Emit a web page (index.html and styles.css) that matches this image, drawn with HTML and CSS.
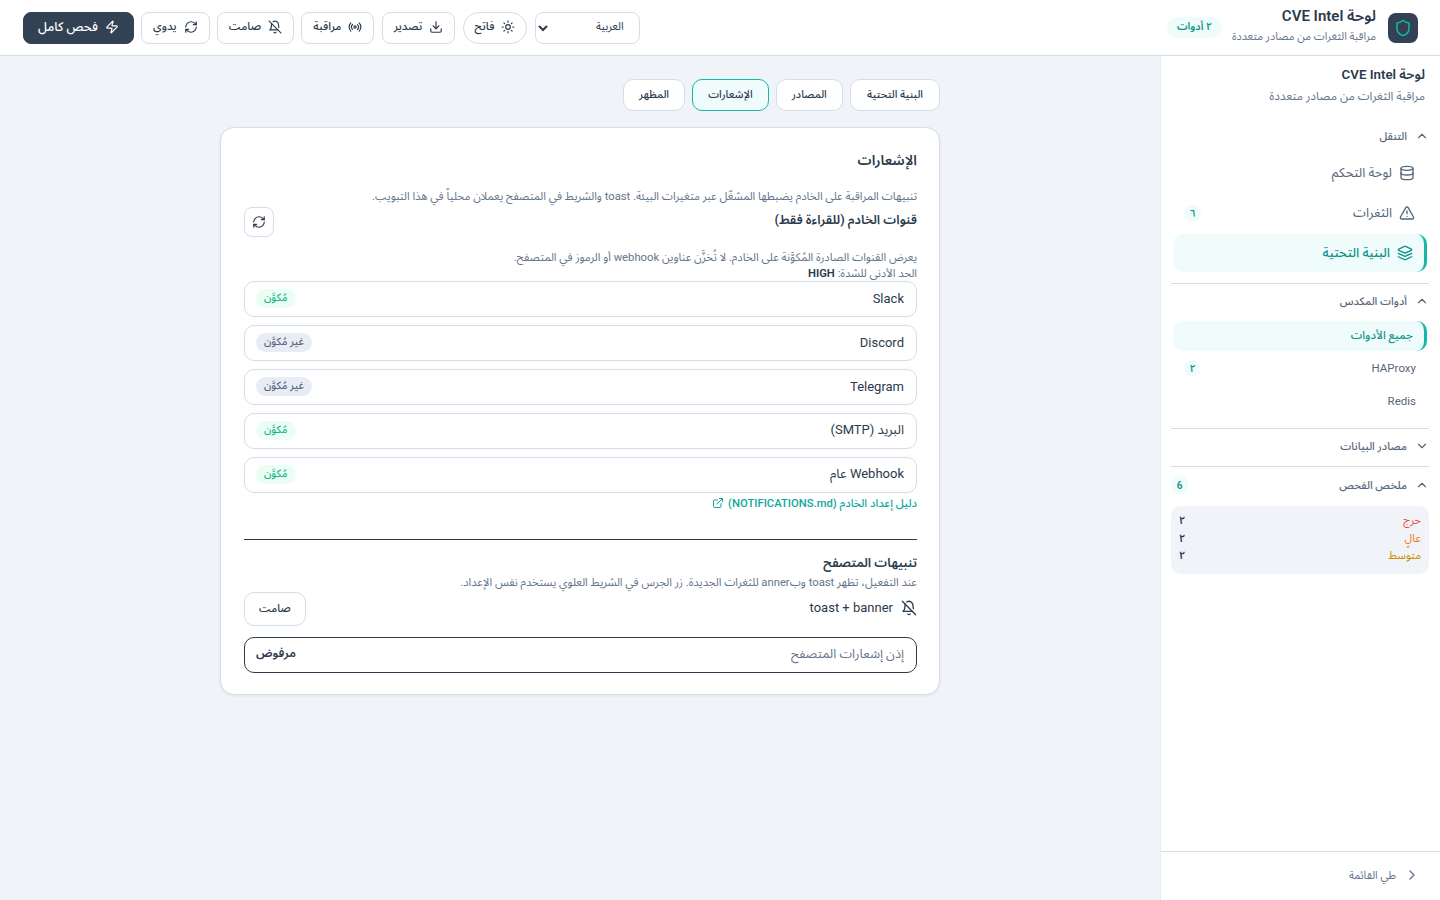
FILE: index.html
```html
<!DOCTYPE html>
<html lang="ar" dir="rtl">

<head>
    <meta charset="UTF-8">
    <meta name="viewport" content="width=device-width, initial-scale=1.0">
    <title>لوحة CVE Intel</title>
    <link rel="stylesheet" href="styles.css">
</head>

<body>
    <svg class="sprite" xmlns="http://www.w3.org/2000/svg">
        <symbol id="i-shield" viewBox="0 0 24 24"><path d="M20 13c0 5-3.5 7.5-7.66 8.95a1 1 0 0 1-.67-.01C7.5 20.5 4 18 4 13V6a1 1 0 0 1 1-1c2 0 4.5-1.2 6.24-2.72a1.17 1.17 0 0 1 1.52 0C14.51 3.81 17 5 19 5a1 1 0 0 1 1 1z"/></symbol>
        <symbol id="i-database" viewBox="0 0 24 24"><ellipse cx="12" cy="5" rx="9" ry="3"/><path d="M3 5V19A9 3 0 0 0 21 19V5"/><path d="M3 12A9 3 0 0 0 21 12"/></symbol>
        <symbol id="i-alert" viewBox="0 0 24 24"><path d="m21.73 18-8-14a2 2 0 0 0-3.48 0l-8 14A2 2 0 0 0 4 21h16a2 2 0 0 0 1.73-3"/><path d="M12 9v4"/><path d="M12 17h.01"/></symbol>
        <symbol id="i-layers" viewBox="0 0 24 24"><path d="m12.83 2.18a2 2 0 0 0-1.66 0L2.6 6.08a1 1 0 0 0 0 1.83l8.58 3.91a2 2 0 0 0 1.66 0l8.58-3.9a1 1 0 0 0 0-1.83Z"/><path d="m22 17.65-9.17 4.16a2 2 0 0 1-1.66 0L2 17.65"/><path d="m22 12.65-9.17 4.16a2 2 0 0 1-1.66 0L2 12.65"/></symbol>
        <symbol id="i-up" viewBox="0 0 24 24"><path d="m18 15-6-6-6 6"/></symbol>
        <symbol id="i-down" viewBox="0 0 24 24"><path d="m6 9 6 6 6-6"/></symbol>
        <symbol id="i-right" viewBox="0 0 24 24"><path d="m9 18 6-6-6-6"/></symbol>
        <symbol id="i-bell-off" viewBox="0 0 24 24"><path d="M8.7 3A6 6 0 0 1 18 8a21.3 21.3 0 0 0 .6 5"/><path d="M17 17H3s3-2 3-9a4.67 4.67 0 0 1 .3-1.7"/><path d="M10.3 21a1.94 1.94 0 0 0 3.4 0"/><path d="m2 2 20 20"/></symbol>
        <symbol id="i-radio" viewBox="0 0 24 24"><path d="M4.9 19.1C1 15.2 1 8.8 4.9 4.9"/><path d="M7.8 16.2c-2.3-2.3-2.3-6.1 0-8.5"/><circle cx="12" cy="12" r="2"/><path d="M16.2 7.8c2.3 2.3 2.3 6.1 0 8.5"/><path d="M19.1 4.9C23 8.8 23 15.1 19.1 19"/></symbol>
        <symbol id="i-download" viewBox="0 0 24 24"><path d="M21 15v4a2 2 0 0 1-2 2H5a2 2 0 0 1-2-2v-4"/><polyline points="7 10 12 15 17 10"/><line x1="12" y1="15" x2="12" y2="3"/></symbol>
        <symbol id="i-sun" viewBox="0 0 24 24"><circle cx="12" cy="12" r="4"/><path d="M12 2v2"/><path d="M12 20v2"/><path d="m4.93 4.93 1.41 1.41"/><path d="m17.66 17.66 1.41 1.41"/><path d="M2 12h2"/><path d="M20 12h2"/><path d="m6.34 17.66-1.41 1.41"/><path d="m19.07 4.93-1.41 1.41"/></symbol>
        <symbol id="i-refresh" viewBox="0 0 24 24"><path d="M3 12a9 9 0 0 1 9-9 9.75 9.75 0 0 1 6.74 2.74L21 8"/><path d="M21 3v5h-5"/><path d="M21 12a9 9 0 0 1-9 9 9.75 9.75 0 0 1-6.74-2.74L3 16"/><path d="M8 16H3v5"/></symbol>
        <symbol id="i-zap" viewBox="0 0 24 24"><path d="M4 14a1 1 0 0 1-.78-1.63l9.9-10.2a.5.5 0 0 1 .86.46l-1.92 6.02A1 1 0 0 0 13 10h7a1 1 0 0 1 .78 1.63l-9.9 10.2a.5.5 0 0 1-.86-.46l1.92-6.02A1 1 0 0 0 11 14z"/></symbol>
        <symbol id="i-external" viewBox="0 0 24 24"><path d="M15 3h6v6"/><path d="M10 14 21 3"/><path d="M18 13v6a2 2 0 0 1-2 2H5a2 2 0 0 1-2-2V8a2 2 0 0 1 2-2h6"/></symbol>
    </svg>

    <header class="topbar">
        <div class="brand">
            <div class="brand-logo"><svg class="icon icon-18"><use href="#i-shield"></use></svg></div>
            <div class="brand-text">
                <h1>لوحة CVE Intel</h1>
                <p>مراقبة الثغرات من مصادر متعددة</p>
            </div>
            <span class="tools-pill">٢ أدوات</span>
        </div>
        <div class="actions">
            <select class="lang-select">
                <option>العربية</option>
                <option>English</option>
            </select>
            <button class="btn btn-pill"><svg class="icon"><use href="#i-sun"></use></svg>فاتح</button>
            <button class="btn"><svg class="icon"><use href="#i-download"></use></svg>تصدير</button>
            <button class="btn"><svg class="icon"><use href="#i-radio"></use></svg>مراقبة</button>
            <button class="btn"><svg class="icon"><use href="#i-bell-off"></use></svg>صامت</button>
            <button class="btn"><svg class="icon"><use href="#i-refresh"></use></svg>يدوي</button>
            <button class="btn btn-dark"><svg class="icon"><use href="#i-zap"></use></svg>فحص كامل</button>
        </div>
    </header>

    <div class="layout">
        <aside class="sidebar">
            <div class="side-scroll">
                <div class="side-brand">
                    <h2>لوحة CVE Intel</h2>
                    <p>مراقبة الثغرات من مصادر متعددة</p>
                </div>

                <section class="side-section side-nav">
                    <div class="side-head"><svg class="icon icon-14"><use href="#i-up"></use></svg><span>التنقل</span></div>
                    <a class="nav-item"><svg class="icon"><use href="#i-database"></use></svg>لوحة التحكم</a>
                    <a class="nav-item"><svg class="icon"><use href="#i-alert"></use></svg>الثغرات<span class="count">٦</span></a>
                    <a class="nav-item active"><svg class="icon"><use href="#i-layers"></use></svg>البنية التحتية</a>
                </section>

                <section class="side-section side-tools">
                    <div class="side-head"><svg class="icon icon-14"><use href="#i-up"></use></svg><span>أدوات المكدس</span></div>
                    <a class="sub-item active">جميع الأدوات</a>
                    <a class="sub-item">HAProxy<span class="count">٢</span></a>
                    <a class="sub-item">Redis</a>
                </section>

                <section class="side-section side-sources">
                    <div class="side-head"><svg class="icon icon-14"><use href="#i-down"></use></svg><span>مصادر البيانات</span></div>
                </section>

                <section class="side-section side-summary">
                    <div class="side-head"><svg class="icon icon-14"><use href="#i-up"></use></svg><span>ملخص الفحص</span><span class="count count-lg">6</span></div>
                    <div class="summary-box">
                        <div class="summary-row"><span class="sev-critical">حرج</span><b>٢</b></div>
                        <div class="summary-row"><span class="sev-high">عالٍ</span><b>٢</b></div>
                        <div class="summary-row"><span class="sev-medium">متوسط</span><b>٢</b></div>
                    </div>
                </section>
            </div>
            <div class="side-foot"><svg class="icon"><use href="#i-right"></use></svg>طي القائمة</div>
        </aside>

        <main class="content">
            <div class="settings">
                <nav class="tabs">
                    <button class="tab">البنية التحتية</button>
                    <button class="tab">المصادر</button>
                    <button class="tab active">الإشعارات</button>
                    <button class="tab">المظهر</button>
                </nav>

                <div class="card">
                    <h2 class="card-title">الإشعارات</h2>
                    <p class="muted intro">تنبيهات المراقبة على الخادم يضبطها المشغّل عبر متغيرات البيئة. toast والشريط في المتصفح يعملان محلياً في هذا التبويب.</p>

                    <div class="channels-head">
                        <h3>قنوات الخادم (للقراءة فقط)</h3>
                        <button class="icon-btn"><svg class="icon"><use href="#i-refresh"></use></svg></button>
                    </div>
                    <p class="muted">يعرض القنوات الصادرة المُكوَّنة على الخادم. لا تُخزَّن عناوين webhook أو الرموز في المتصفح.</p>
                    <p class="muted severity">الحد الأدنى للشدة: <b>HIGH</b></p>

                    <div class="channels">
                        <div class="channel"><span>Slack</span><span class="badge on">مُكوَّن</span></div>
                        <div class="channel"><span>Discord</span><span class="badge off">غير مُكوَّن</span></div>
                        <div class="channel"><span>Telegram</span><span class="badge off">غير مُكوَّن</span></div>
                        <div class="channel"><span>البريد (SMTP)</span><span class="badge on">مُكوَّن</span></div>
                        <div class="channel"><span>Webhook عام</span><span class="badge on">مُكوَّن</span></div>
                    </div>
                    <a class="guide-link">دليل إعداد الخادم (NOTIFICATIONS.md)<svg class="icon icon-12"><use href="#i-external"></use></svg></a>

                    <hr class="divider">

                    <h3 class="browser-title">تنبيهات المتصفح</h3>
                    <p class="muted browser-desc">عند التفعيل، تظهر toast وبanner للثغرات الجديدة. زر الجرس في الشريط العلوي يستخدم نفس الإعداد.</p>
                    <div class="toast-row">
                        <div class="toast-label"><svg class="icon"><use href="#i-bell-off"></use></svg>toast + banner</div>
                        <button class="btn btn-tall">صامت</button>
                    </div>
                    <div class="channel permission"><span>إذن إشعارات المتصفح</span><b>مرفوض</b></div>
                </div>
            </div>
        </main>
    </div>
</body>

</html>
```

FILE: styles.css
```css
* {
    margin: 0;
    padding: 0;
    box-sizing: border-box;
}

body {
    height: 100vh;
    overflow: hidden;
    background-color: #f0f4f8;
    color: #2b3a4d;
    font-family: Roboto, "Noto Sans Arabic", "Noto Sans", sans-serif;
    font-size: 14px;
}

button,
select {
    font-family: inherit;
    color: inherit;
}

.sprite {
    display: none;
}

.icon {
    width: 16px;
    height: 16px;
    flex-shrink: 0;
    fill: none;
    stroke: currentColor;
    stroke-width: 2;
    stroke-linecap: round;
    stroke-linejoin: round;
}

.icon-18 {
    width: 18px;
    height: 18px;
}

.icon-14 {
    width: 14px;
    height: 14px;
}

.icon-12 {
    width: 12px;
    height: 12px;
}

/* top bar */
.topbar {
    height: 56px;
    padding: 0 22px 0 23px;
    display: flex;
    justify-content: space-between;
    align-items: center;
    background-color: #fff;
    border-bottom: 1px solid #d5dee8;
}

.brand {
    display: flex;
    align-items: center;
}

.brand-logo {
    width: 30px;
    height: 30px;
    margin-left: 12px;
    display: flex;
    align-items: center;
    justify-content: center;
    border-radius: 8px;
    background-color: #334155;
    color: #14b8a6;
}

.brand-text {
    padding-bottom: 3px;
}

.brand-text h1 {
    font-size: 15px;
    font-weight: 600;
    line-height: 18px;
}

.brand-text p {
    margin-top: 4px;
    font-size: 11px;
    line-height: 16px;
    color: #64748b;
}

.tools-pill {
    margin-right: 10px;
    padding: 0 10px;
    height: 21px;
    line-height: 20px;
    border-radius: 11px;
    background-color: #f0fbfc;
    color: #0d9488;
    font-size: 10.5px;
    font-weight: 600;
}

.actions {
    display: flex;
    align-items: center;
    gap: 7.2px;
}

.lang-select {
    width: 105px;
    height: 32px;
    padding: 0 11px 2px 0;
    border: 1px solid #d5dee8;
    border-radius: 8px;
    background-color: #fff;
    font-size: 11px;
}

.btn {
    height: 32px;
    padding: 0 11px 2px;
    display: flex;
    align-items: center;
    gap: 7px;
    border: 1px solid #d5dee8;
    border-radius: 8px;
    background-color: #fff;
    font-size: 11.25px;
    font-weight: 500;
    cursor: pointer;
}

.btn .icon {
    width: 14px;
    height: 14px;
}

.btn-pill {
    border-radius: 16px;
}

.btn-dark {
    padding: 0 14px 2px;
    border-color: #334155;
    background-color: #334155;
    color: #fff;
    font-size: 12.6px;
}

.btn-tall {
    height: 34px;
    padding: 0 14px 2px;
    border-radius: 10px;
    font-size: 11px;
}

/* page layout */
.layout {
    height: calc(100vh - 56px);
    display: flex;
}

.sidebar {
    width: 280px;
    flex-shrink: 0;
    display: flex;
    flex-direction: column;
    background-color: #fff;
    border-left: 1px solid #e6ecf2;
}

.side-scroll {
    flex: 1;
    padding: 0 11px 0 10px;
}

.side-brand {
    padding: 9px 4px 0;
}

.side-brand h2 {
    font-size: 13.3px;
    font-weight: 600;
    line-height: 20px;
}

.side-brand p {
    margin-top: 2px;
    font-size: 11.9px;
    line-height: 18px;
    color: #64748b;
}

.side-head {
    height: 20px;
    display: flex;
    align-items: center;
    gap: 8px;
    color: #56657a;
    font-size: 11px;
    font-weight: 500;
}

.side-section {
    border-bottom: 1px solid #d5dee8;
}

.side-nav {
    padding-top: 21px;
    padding-bottom: 9px;
}

.side-nav .side-head {
    margin-bottom: 8px;
}

.nav-item {
    height: 38px;
    margin: 0 2px 2px;
    padding: 0 12px 0 11px;
    display: flex;
    align-items: center;
    gap: 7px;
    color: #56657a;
    font-size: 13px;
    font-weight: 400;
    border-radius: 10px;
}

.nav-item.active {
    padding-right: 11px;
}

.nav-item.active,
.sub-item.active {
    background-color: #f0fbfc;
    color: #0d9488;
    font-weight: 500;
    border-right: 3px solid #14b8a6;
}

.count {
    margin-right: auto;
    width: 17px;
    height: 17px;
    display: flex;
    align-items: center;
    justify-content: center;
    border-radius: 50%;
    background-color: #f0fbfc;
    color: #0d9488;
    font-size: 10px;
    font-weight: 600;
}

.side-tools {
    padding-top: 7px;
    padding-bottom: 9px;
}

.side-tools .side-head {
    margin-bottom: 10px;
}

.sub-item {
    height: 30px;
    margin: 0 2px 3px;
    padding: 0 11px;
    display: flex;
    align-items: center;
    color: #56657a;
    font-size: 11.5px;
    border-radius: 10px;
}

.sub-item.active {
    margin-bottom: 2px;
    padding-bottom: 2px;
}

.side-sources {
    padding: 7px 0 10px;
}

.side-summary {
    padding-top: 8px;
    border-bottom: 0;
}

.count-lg {
    width: 17px;
    height: 20px;
}

.summary-box {
    margin-top: 11px;
    height: 68px;
    padding: 6px 8px;
    border-radius: 10px;
    background-color: #f0f4f8;
    font-size: 11px;
}

.summary-row {
    height: 17.5px;
    display: flex;
    justify-content: space-between;
    align-items: center;
}

.summary-row b {
    font-weight: 600;
}

.sev-critical {
    color: #ef4444;
}

.sev-high {
    color: #f97316;
}

.sev-medium {
    color: #ca8a04;
}

.side-foot {
    height: 49px;
    padding: 0 20px 2px;
    display: flex;
    align-items: center;
    gap: 8px;
    border-top: 1px solid #d5dee8;
    color: #64748b;
    font-size: 11px;
}

/* settings page */
.content {
    flex: 1;
    padding-top: 23px;
    display: flex;
    justify-content: center;
}

.settings {
    width: 720px;
}

.tabs {
    display: flex;
    gap: 7.2px;
    margin-bottom: 16px;
}

.tab {
    height: 32px;
    padding: 0 15px 2px;
    border: 1px solid #d5dee8;
    border-radius: 10px;
    background-color: #fff;
    font-size: 10.8px;
    font-weight: 500;
    cursor: pointer;
}

.tab:first-child {
    padding: 0 16px 2px;
}

.tab.active {
    border-color: #14b8a6;
    background-color: #f0fbfc;
}

.card {
    padding: 22px 22px 21px 23px;
    background-color: #fff;
    border: 1px solid #d5dee8;
    border-radius: 14px;
    box-shadow: 0 1px 3px rgba(15, 23, 42, 0.08);
}

.card-title {
    font-size: 14px;
    font-weight: 600;
    line-height: 20px;
}

.muted {
    font-size: 11.25px;
    line-height: 16px;
    color: #64748b;
}

.intro {
    margin-top: 19px;
}

.channels-head {
    display: flex;
    justify-content: space-between;
    align-items: flex-start;
    margin-top: 2px;
    margin-bottom: 13px;
}

.channels-head h3 {
    padding-top: 2px;
    font-size: 12.8px;
    font-weight: 600;
    line-height: 22px;
}

.icon-btn {
    width: 30px;
    height: 30px;
    display: flex;
    align-items: center;
    justify-content: center;
    border: 1px solid #d5dee8;
    border-radius: 8px;
    background-color: #fff;
}

.icon-btn .icon {
    width: 14px;
    height: 14px;
}

.severity b {
    color: #2b3a4d;
    font-weight: 600;
}

.channels {
    display: flex;
    flex-direction: column;
    gap: 8px;
    margin-top: -1px;
}

.channel {
    height: 36px;
    padding: 0 12px 2px 11px;
    display: flex;
    justify-content: space-between;
    align-items: center;
    border: 1px solid #d5dee8;
    border-radius: 10px;
    font-size: 13px;
}

.badge {
    height: 19px;
    padding: 0 8px;
    display: flex;
    align-items: center;
    border-radius: 10px;
    font-size: 10.5px;
    font-weight: 500;
}

.badge.on {
    background-color: #ecfdf5;
    color: #10b981;
}

.badge.off {
    background-color: #e8edf5;
    color: #56657a;
}

.guide-link {
    margin-top: 2px;
    display: flex;
    align-items: center;
    gap: 4px;
    height: 16px;
    color: #0fa89b;
    font-size: 11.25px;
    font-weight: 500;
}

.divider {
    margin-top: 28px;
    border: 0;
    border-top: 1px solid #2b3a4d;
}

.browser-title {
    margin-top: 13px;
    font-size: 12.8px;
    font-weight: 600;
    line-height: 20px;
}

.browser-desc {
    margin-top: 2px;
}

.toast-row {
    margin-top: 1px;
    display: flex;
    justify-content: space-between;
    align-items: center;
}

.toast-label {
    display: flex;
    align-items: center;
    gap: 8px;
    padding-bottom: 3px;
    font-size: 13px;
}

.permission {
    margin-top: 11px;
    padding-bottom: 4px;
    border-color: #2b3a4d;
    color: #64748b;
    font-size: 12.8px;
}

.permission b {
    color: #2b3a4d;
    font-size: 12px;
    font-weight: 600;
}
```
